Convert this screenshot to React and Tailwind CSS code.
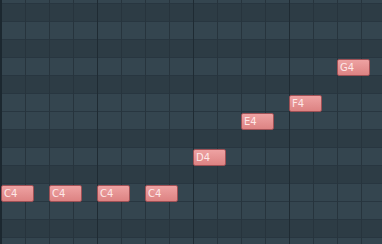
import React from 'react'

// piano roll rows, top (partially hidden) to bottom
const ROWS = [
  { name: 'B4', black: false },
  { name: 'A#4', black: true },
  { name: 'A4', black: false },
  { name: 'G#4', black: true },
  { name: 'G4', black: false },
  { name: 'F#4', black: true },
  { name: 'F4', black: false },
  { name: 'E4', black: false },
  { name: 'D#4', black: true },
  { name: 'D4', black: false },
  { name: 'C#4', black: true },
  { name: 'C4', black: false },
  { name: 'B3', black: false },
  { name: 'A#3', black: true },
  { name: 'A3', black: false },
]

const NOTES = [
  { pitch: 'C4', step: 0 },
  { pitch: 'C4', step: 1 },
  { pitch: 'C4', step: 2 },
  { pitch: 'C4', step: 3 },
  { pitch: 'D4', step: 4 },
  { pitch: 'E4', step: 5 },
  { pitch: 'F4', step: 6 },
  { pitch: 'G4', step: 7 },
]

const ROW_H = 18
const OFFSET = -14

export default function App() {
  return (
    <div className="relative w-[382px] h-[244px] overflow-hidden bg-[#2d3c45]" style={{ fontFamily: '"DejaVu Sans", sans-serif' }}>
      {/* rows */}
      <div className="flex flex-col -mt-[14px]">
        {ROWS.map(r => (
          <div key={r.name}
            className={`h-[18px] shrink-0 border-b border-[#283640] ${r.black ? 'bg-[#2d3c45]' : 'bg-[#34454f]'}`} />
        ))}
      </div>

      {/* beat lines */}
      <div className="absolute inset-0 flex pl-px">
        {Array.from({ length: 16 }).map((_, i) => (
          <div key={i}
            className={`w-[24px] shrink-0 border-l ${i === 0 ? 'border-[#1c2830] shadow-[-1px_0_0_#1c2830]' : i % 4 === 0 ? 'border-[#1f2b33]' : 'border-[#27343d]'}`} />
        ))}
      </div>

      {/* notes */}
      {NOTES.map((n, i) => {
        const row = ROWS.findIndex(r => r.name === n.pitch)
        return (
          <div key={i}
            className="absolute w-[33px] h-[17px] rounded-[2px] border border-[#9e5055] bg-gradient-to-b from-[#eea2a2] to-[#dd8383] flex items-center pl-[2px] text-[10px] leading-none text-[#fde8e8]"
            style={{ left: 1 + n.step * 48, top: OFFSET + row * ROW_H + 1 }}>
            {n.pitch}
          </div>
        )
      })}
    </div>
  )
}
